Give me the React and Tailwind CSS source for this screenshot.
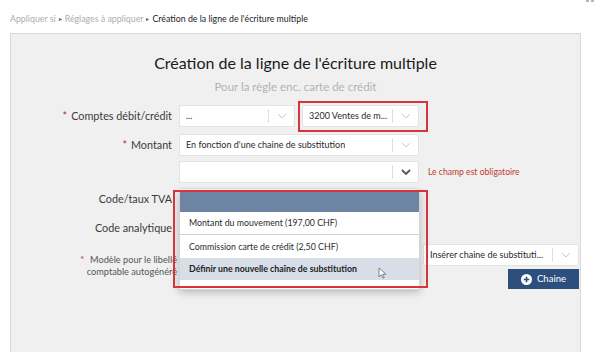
import React from 'react';

const Chevron = ({ dark }) => (
  <svg width="10" height="6" viewBox="0 0 10 6" className="shrink-0">
    <polyline
      points="1,1 5,5 9,1"
      fill="none"
      stroke={dark ? '#555' : '#c9c9c9'}
      strokeWidth={dark ? 1.8 : 1}
    />
  </svg>
);

// Select-like box with separator and chevron on the right
const Select = ({ text, className = '', dark = false }) => (
  <div className={`h-[22px] bg-white border border-[#e3e3e3] rounded-[2px] flex items-center ${className}`}>
    <span className="flex-1 pl-[6px] text-[9px] text-[#2a2a2a] truncate">{text}</span>
    <span className="w-px h-[14px] bg-[#dedede]"></span>
    <span className="w-[25px] flex items-center justify-center">
      <Chevron dark={dark} />
    </span>
  </div>
);

const Label = ({ children, required }) => (
  <div className="w-[161px] shrink-0 text-right text-[10.8px] text-[#3a3a3a] leading-none">
    {required && <span className="text-[#a83232] mr-[4px]">*</span>}
    {children}
  </div>
);

const App = () => {
  return (
    <div className="relative w-[600px] h-[352px] overflow-hidden bg-white font-['Lato','Open_Sans',sans-serif]">
      {/* bit of a close button cut off at the top */}
      <div className="absolute top-0 left-[586px] flex gap-[2px]">
        <span className="w-[3px] h-[2px] bg-[#b5b5b5]"></span>
        <span className="w-[3px] h-[2px] bg-[#b5b5b5]"></span>
      </div>

      {/* Breadcrumb */}
      <div className="h-[33px] pl-[10px] pt-[13px] flex items-start gap-[3px] text-[8.8px] leading-[11px]">
        <span className="text-[#adadad]">Appliquer si</span>
        <span className="text-[#555] text-[6px] leading-[11px]">▸</span>
        <span className="text-[#adadad]">Réglages à appliquer</span>
        <span className="text-[#555] text-[6px] leading-[11px]">▸</span>
        <span className="text-[#222]">Création de la ligne de l'écriture multiple</span>
      </div>

      {/* Panel */}
      <div className="relative ml-[10px] w-[571px] h-[330px] bg-[#f0f0f0] border border-[#d9d9d9]">
        <h1 className="mt-[18px] h-[22px] text-center text-[16px] leading-[22px] text-[#1a1a1a]">
          Création de la ligne de l'écriture multiple
        </h1>
        <p className="mt-[5px] h-[16px] text-center text-[11.5px] leading-[16px] text-[#b3b3b3]">
          Pour la règle enc. carte de crédit
        </p>

        {/* Comptes */}
        <div className="mt-[10px] flex items-center">
          <Label required>Comptes débit/crédit</Label>
          <Select text="..." className="ml-[7px] w-[116px]" />
          <div className="relative ml-[7px]">
            <Select text="3200 Ventes de m..." className="w-[117px]" />
            <div className="absolute -left-[4px] -top-[4px] w-[130px] h-[31px] border-2 border-[#d8343c]"></div>
          </div>
        </div>

        {/* Montant */}
        <div className="mt-[7px] flex items-center">
          <Label required>Montant</Label>
          <Select text="En fonction d'une chaine de substitution" className="ml-[7px] w-[240px]" />
        </div>

        <div className="mt-[5px] flex items-center">
          <div className="w-[161px] shrink-0"></div>
          <Select text="" dark className="ml-[7px] w-[240px]" />
          <span className="ml-[9px] text-[8.6px] text-[#c0392b]">Le champ est obligatoire</span>
        </div>

        {/* Code/taux TVA */}
        <div className="mt-[5px] h-[22px] flex items-center">
          <Label>Code/taux TVA</Label>
          <Select text="" className="ml-[7px] w-[240px]" />
        </div>

        {/* Code analytique */}
        <div className="mt-[7px] h-[22px] flex items-center">
          <Label>Code analytique</Label>
          <Select text="" className="ml-[7px] w-[240px]" />
        </div>

        {/* Modèle */}
        <div className="mt-[5px] flex items-start">
          <div className="w-[166px] shrink-0 pt-[10px] text-right text-[9.2px] leading-[12px] text-[#555]">
            <span className="text-[#a83232] mr-[6px]">*</span>Modèle pour le libellé
            <br />
            comptable autogénéré
          </div>
          <div className="ml-[2px] w-[240px] h-[45px] bg-white border border-[#e3e3e3]"></div>
          <div className="ml-[4px] flex flex-col items-end">
            <Select text="Insérer chaine de substituti..." className="w-[156px]" />
            <button className="mt-[3px] w-[71px] h-[20px] bg-[#2c4f7d] text-white text-[9.5px] flex items-center justify-center gap-[5px]">
              <svg width="11" height="11" viewBox="0 0 12 12">
                <circle cx="6" cy="6" r="6" fill="#fff" />
                <path d="M6 3v6M3 6h6" stroke="#2c4f7d" strokeWidth="1.8" />
              </svg>
              Chaine
            </button>
          </div>
        </div>

        {/* Open dropdown menu */}
        <div className="absolute left-[168px] top-[157px] w-[241px] bg-white shadow-[0_2px_8px_rgba(0,0,0,0.25)] border border-[#d6d6d6]">
          <div className="h-[20px] bg-[#6d84a2]"></div>
          <div className="h-[23px] flex items-center pl-[9px] text-[8.8px] text-[#2a2a2a] border-b border-[#cfcfcf]">
            Montant du mouvement (197,00 CHF)
          </div>
          <div className="h-[23px] flex items-center pl-[9px] text-[8.8px] text-[#2a2a2a]">
            Commission carte de crédit (2,50 CHF)
          </div>
          <div className="relative h-[22px] flex items-center pl-[9px] text-[8.8px] font-bold text-[#222] bg-[#d7dee7]">
            Définir une nouvelle chaîne de substitution
            {/* mouse cursor */}
            <svg className="absolute left-[198px] top-[9px]" width="9" height="12" viewBox="0 0 9 12">
              <path d="M1 1v9l2.3-2.2 1.6 3.4 1.4-.6-1.6-3.3H8z" fill="#fff" stroke="#666" strokeWidth="0.8" />
            </svg>
          </div>
          <div className="h-[9px]"></div>
        </div>
        <div className="absolute left-[162px] top-[156px] w-[255px] h-[98px] border-2 border-[#d8343c]"></div>
      </div>
    </div>
  );
};

export default App;
